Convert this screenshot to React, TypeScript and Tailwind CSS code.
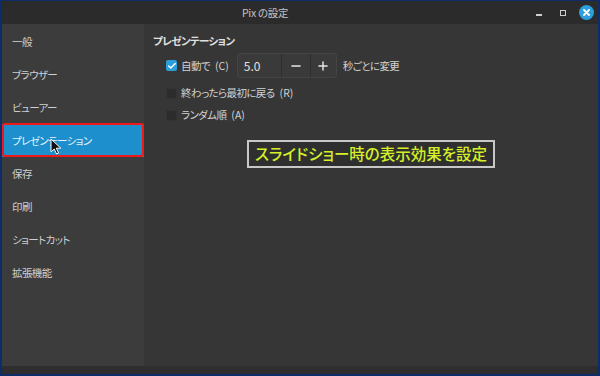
import { Check, Minus, Plus } from 'lucide-react';

const menu = ['一般', 'ブラウザー', 'ビューアー', 'プレゼンテーション', '保存', '印刷', 'ショートカット', '拡張機能'];

function Box({ checked = false }: { checked?: boolean }) {
  return checked ? (
    <span className="w-[11px] h-[11px] rounded-[2px] bg-[#2a9fd8] flex items-center justify-center">
      <Check className="w-[10px] h-[10px] text-white" strokeWidth={3.5} />
    </span>
  ) : (
    <span className="w-[11px] h-[11px] rounded-[2px] bg-[#2c2c2c] border border-[#333]" />
  );
}

function Label({ text, key2 }: { text: string; key2: string }) {
  return (
    <span className="ml-[4px]">
      {text}
      <span className="ml-[5px] tracking-normal">({key2})</span>
    </span>
  );
}

export default function App() {
  return (
    <div
      className="w-[600px] h-[376px] overflow-hidden bg-[#2b2b2b] border-l-2 border-r-2 border-t border-b-2 border-[#0c2c6a] flex flex-col text-[#d2d2d2] [font-feature-settings:'palt']"
      style={{ fontFamily: '"Noto Sans CJK JP", "Noto Sans", sans-serif' }}
    >
      {/* title bar */}
      <div className="h-[23px] shrink-0 flex items-center relative bg-[#2b2b2b]">
        <span className="absolute left-[240px] top-[4px] text-[10.5px] tracking-[-0.3px] text-[#c4c4c4]">Pix の設定</span>
        <div className="ml-auto flex items-center gap-[13px] pr-[4px]">
          <span className="w-[6px] h-[1.5px] bg-[#cfcfcf] mt-[5px]" />
          <span className="w-[6px] h-[6px] border border-[#cfcfcf] ml-[5px]" />
          <span className="w-[15px] h-[15px] rounded-full bg-[#2c9fdd] flex items-center justify-center">
            <svg width="7" height="7" viewBox="0 0 7 7">
              <path d="M1 1L6 6M6 1L1 6" stroke="white" strokeWidth="1.8" strokeLinecap="round" />
            </svg>
          </span>
        </div>
      </div>

      <div className="flex h-[342px] shrink-0">
        {/* sidebar */}
        <div className="w-[142px] bg-[#3c3c3c] pt-[1px] shrink-0">
          {menu.map((m, i) => (
            <div
              key={m}
              className={`relative h-[33px] flex items-center pl-[10px] text-[10.5px] tracking-[-0.6px] ${
                i === 3 ? 'bg-[#1d8fcd] text-[#e8f2fa]' : 'text-[#cfcfcf]'
              }`}
            >
              {m}
              {i === 3 && (
                <>
                  <span className="absolute left-0 -top-[1px] w-[142px] h-[34px] border-[2.5px] border-[#f01818] rounded-[3px]" />
                  <svg className="absolute left-[48px] top-[14px]" width="13" height="17" viewBox="0 0 13 17">
                    <path d="M1 1L1 14L4.2 11L6.6 16L8.6 15L6.3 10.2L10.8 10.2Z" fill="#111" stroke="#fff" strokeWidth="1" strokeLinejoin="round" />
                  </svg>
                </>
              )}
            </div>
          ))}
        </div>

        {/* content */}
        <div className="flex-1 bg-[#363636] relative pl-[9px] pt-[10px] text-[10.5px] tracking-[-0.6px]">
          <div className="font-bold text-[#e0e0e0] leading-[14px]">プレゼンテーション</div>
          <div className="pl-[13px] mt-[5px] flex flex-col">
            <div className="h-[25px] flex items-center">
              <Box checked />
              <Label text="自動で" key2="C" />
              <div className="ml-[8px] h-[25px] w-[100px] flex rounded-[3px] border border-[#444] bg-[#3a3a3a] tracking-normal">
                <span className="w-[43px] flex items-center pl-[6px] text-[12px] text-[#e0e0e0]">5.0</span>
                <span className="w-[29px] flex items-center justify-center border-l border-[#2e2e2e]">
                  <Minus className="w-[14px] h-[14px] text-[#e6e6e6]" strokeWidth={2.5} />
                </span>
                <span className="flex-1 flex items-center justify-center border-l border-[#2e2e2e]">
                  <Plus className="w-[14px] h-[14px] text-[#e6e6e6]" strokeWidth={2.5} />
                </span>
              </div>
              <span className="ml-[6px]">秒ごとに変更</span>
            </div>
            <div className="h-[22px] mt-[4px] flex items-center">
              <Box />
              <Label text="終わったら最初に戻る" key2="R" />
            </div>
            <div className="h-[22px] flex items-center">
              <Box />
              <Label text="ランダム順" key2="A" />
            </div>
          </div>

          {/* annotation */}
          <div className="absolute left-[103px] top-[116px] w-[248px] h-[28px] border-2 border-[#c8c8c8] bg-[#2f2f2f] flex items-center justify-center whitespace-nowrap text-[15.5px] tracking-normal font-medium leading-none text-[#d6f028]">
            スライドショー時の表示効果を設定
          </div>
        </div>
      </div>

      <div className="flex-1 bg-[#2e2e2e]" />
    </div>
  );
}
